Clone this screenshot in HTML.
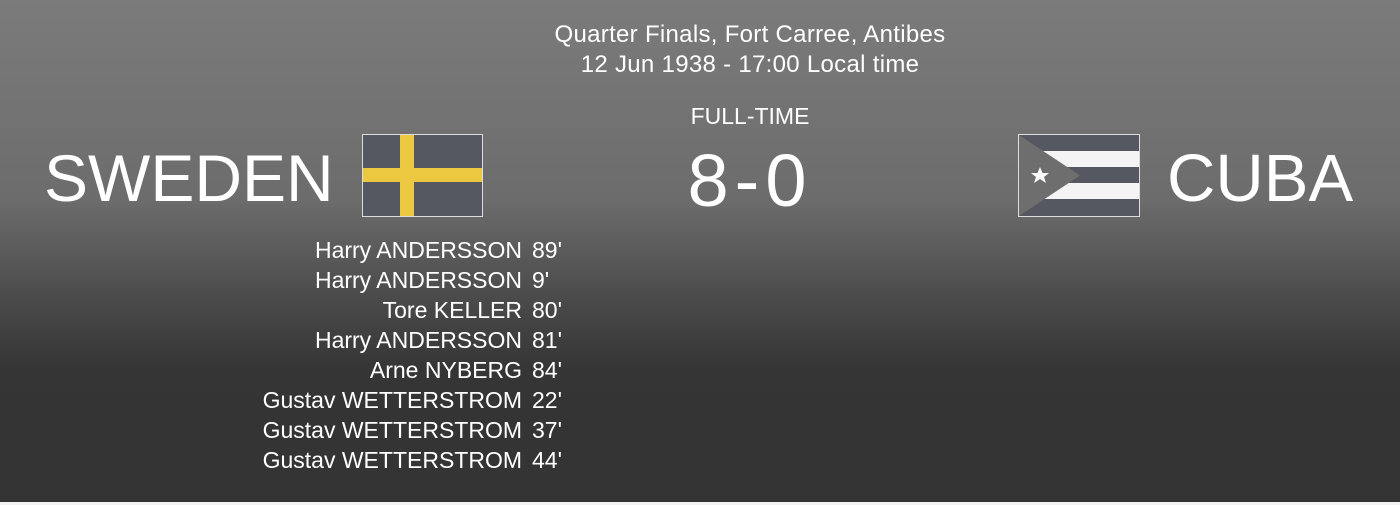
<!DOCTYPE html>
<html><head><style>
body{margin:0;width:1400px;height:505px;overflow:hidden;font-family:"Liberation Sans",sans-serif;color:#fff;
background:linear-gradient(to bottom,#7b7b7b 0px,#6c6c6c 200px,#4a4a4a 300px,#353535 370px,#333 502px,#f2f2f2 502px);position:relative}
.t{position:absolute;white-space:nowrap}
.c{left:0;width:1500px;text-align:center}
.sc{position:absolute;right:833px;font-size:23px;line-height:30px;text-align:right;white-space:nowrap}
.sc span{display:inline-block;width:35px;text-align:left;margin-left:10px}
</style></head><body>
<div class="t c" style="top:20px;font-size:24px;line-height:30px;letter-spacing:0.3px">Quarter Finals, Fort Carree, Antibes<br>12 Jun 1938 - 17:00 Local time</div>
<div class="t c" style="top:103px;font-size:23px">FULL-TIME</div>
<div class="t c" style="top:138px;font-size:74px;letter-spacing:6px">8-0</div>
<div class="t" style="left:44px;top:140px;font-size:66px">SWEDEN</div>
<div class="t" style="left:1167px;top:140px;font-size:67px">CUBA</div>
<svg class="t" style="left:362px;top:134px" width="121" height="83"><rect x="0.5" y="0.5" width="120" height="82" fill="#555761" stroke="#ddd"/><rect x="38" y="1" width="14" height="81" fill="#ecc840"/><rect x="1" y="34" width="119" height="14" fill="#ecc840"/></svg>
<svg class="t" style="left:1018px;top:134px" width="122" height="83"><rect x="0.5" y="0.5" width="121" height="82" fill="#555761" stroke="#ddd"/><rect x="1" y="17" width="120" height="16" fill="#f4f4f4"/><rect x="1" y="49" width="120" height="16" fill="#f4f4f4"/><polygon points="1,1 62,41.5 1,82" fill="#6e6e6e"/><polygon points="22,33 24.5,39 31,39 26,43 28,49 22,45 16,49 18,43 13,39 19.5,39" fill="#fff"/></svg>
<div class="sc" style="top:235px">Harry ANDERSSON<span>89'</span><br>Harry ANDERSSON<span>9'</span><br>Tore KELLER<span>80'</span><br>Harry ANDERSSON<span>81'</span><br>Arne NYBERG<span>84'</span><br>Gustav WETTERSTROM<span>22'</span><br>Gustav WETTERSTROM<span>37'</span><br>Gustav WETTERSTROM<span>44'</span></div>
</body></html>
